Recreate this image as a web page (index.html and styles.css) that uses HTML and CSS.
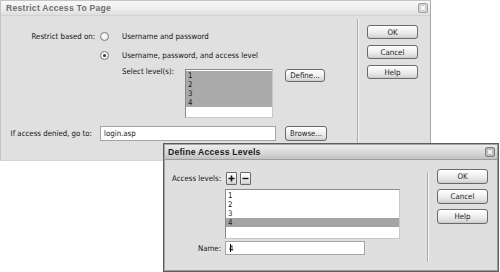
FILE: index.html
```html
<!DOCTYPE html>
<html>
<head>
<meta charset="utf-8">
<link rel="stylesheet" href="styles.css">
</head>
<body>
<div class="desk">
  <div class="dlg dlg1">
    <div class="title inactive">
      <span class="ttext">Restrict Access To Page</span>
      <svg class="close" width="10" height="10" viewBox="0 0 10 10"><rect x="0.5" y="0.5" width="9" height="9" rx="1.5" fill="#d0d0d0" stroke="#a0a0a0"/><path d="M3 3L7 7M7 3L3 7" stroke="#fff" stroke-width="1.4"/></svg>
    </div>
    <div class="body">
      <div class="main1">
        <div class="row r1">
          <span class="lbl l94">Restrict based on:</span>
          <span class="radio"></span>
          <span class="rtext">Username and password</span>
        </div>
        <div class="row r2">
          <span class="radio on"></span>
          <span class="rtext">Username, password, and access level</span>
        </div>
        <div class="row r3">
          <span class="sel-lbl">Select level(s):</span>
          <div class="list list1">
            <div class="item sel">1</div>
            <div class="item sel">2</div>
            <div class="item sel">3</div>
            <div class="item sel">4</div>
          </div>
          <div class="btn define">Define...</div>
        </div>
        <div class="row r4">
          <span class="lbl l91">If access denied, go to:</span>
          <div class="input in1">login.asp</div>
          <div class="btn browse">Browse...</div>
        </div>
      </div>
      <div class="divider div1"></div>
      <div class="btncol col1">
        <div class="btn side">OK</div>
        <div class="btn side">Cancel</div>
        <div class="btn side">Help</div>
      </div>
    </div>
  </div>

  <div class="dlg dlg2">
    <div class="title active">
      <span class="ttext">Define Access Levels</span>
      <svg class="close" width="10" height="10" viewBox="0 0 10 10"><rect x="0.5" y="0.5" width="9" height="9" rx="1.5" fill="#b8b8b8" stroke="#808080"/><path d="M3 3L7 7M7 3L3 7" stroke="#fff" stroke-width="1.4"/></svg>
    </div>
    <div class="body">
      <div class="main2">
        <div class="row a1">
          <span class="lbl l57">Access levels:</span>
          <div class="btn sq plus"><svg width="7" height="7" viewBox="0 0 7 7"><path d="M3.5 0.5V6.5M0.5 3.5H6.5" stroke="#111" stroke-width="1.6"/></svg></div>
          <div class="btn sq minus"><svg width="7" height="7" viewBox="0 0 7 7"><path d="M0.5 3.5H6.5" stroke="#111" stroke-width="1.4"/></svg></div>
        </div>
        <div class="list list2">
          <div class="item">1</div>
          <div class="item">2</div>
          <div class="item">3</div>
          <div class="item sel">4</div>
        </div>
        <div class="row a3">
          <span class="lbl l57">Name:</span>
          <div class="input in2">4<span class="caret"></span></div>
        </div>
      </div>
      <div class="divider div2"></div>
      <div class="btncol col2">
        <div class="btn side2">OK</div>
        <div class="btn side2">Cancel</div>
        <div class="btn side2">Help</div>
      </div>
    </div>
  </div>
</div>
</body>
</html>
```

FILE: styles.css
```css
html, body {
  margin: 0;
  padding: 0;
  background: #ffffff;
}

.desk {
  position: relative;
  width: 500px;
  height: 272px;
  overflow: hidden;
  font-family: "DejaVu Sans Condensed", "Liberation Sans", Arial, sans-serif;
  font-size: 7.8px;
  color: #141414;
}

.dlg {
  position: absolute;
  box-sizing: border-box;
  display: flex;
  flex-direction: column;
  background: #e0e0e0;
}

.dlg1 {
  left: 0;
  top: 0;
  width: 431px;
  height: 161px;
  border: 1px solid #c4c4c4;
  border-right-color: #a8a8a8;
  border-bottom-color: #d6d6d6;
}

.dlg2 {
  left: 163px;
  top: 143px;
  width: 336px;
  height: 129px;
  border: 1px solid #5c5c5c;
  box-shadow: inset 1px 1px 0 #a6a6a6, inset -1px -1px 0 #9a9a9a;
  background: #dfdfdf;
}

.title {
  height: 14px;
  display: flex;
  align-items: center;
  justify-content: space-between;
  padding: 0 2px 0 5px;
  flex: none;
  font-family: "Liberation Sans", Arial, sans-serif;
}

.title.inactive {
  background: linear-gradient(#f8f8f8, #ececec 60%, #dedede);
  border-bottom: 1px solid #d2d2d2;
  color: #6e6e6e;
}

.title.active {
  margin: 1px 1px 0 1px;
  padding-left: 3px;
  height: 14px;
  background: linear-gradient(#ececec, #dadada 50%, #c2c2c2);
  border-bottom: 1px solid #9c9c9c;
  color: #1a1a1a;
}

.ttext {
  font-weight: bold;
  font-size: 8.6px;
  letter-spacing: 0.25px;
}

.close {
  display: block;
}

.body {
  display: flex;
  flex: 1;
}

.row {
  display: flex;
  align-items: center;
}

.lbl {
  text-align: right;
  flex: none;
  white-space: nowrap;
}

.l94 { width: 94px; }
.l91 { width: 91px; }
.l57 { width: 57px; }

/* Dialog 1 */
.main1 {
  width: 356px;
  padding-top: 14px;
  flex: none;
}

.r1 {
  height: 12px;
}

.r1 .radio {
  margin-left: 5px;
}

.rtext {
  margin-left: 13px;
  white-space: nowrap;
}

.r2 {
  height: 12px;
  margin-top: 7px;
  padding-left: 99px;
}

.radio {
  width: 7px;
  height: 7px;
  border: 1px solid #7c7c7c;
  border-radius: 50%;
  background: radial-gradient(circle at 40% 40%, #ffffff, #e4e4e4);
  display: flex;
  align-items: center;
  justify-content: center;
  flex: none;
}

.radio.on::after {
  content: "";
  width: 3px;
  height: 3px;
  border-radius: 50%;
  background: #3a3a3a;
}

.r3 {
  margin-top: 5px;
  padding-left: 121px;
  align-items: flex-start;
}

.sel-lbl {
  width: 63px;
  line-height: 12px;
  flex: none;
  white-space: nowrap;
}

.list {
  box-sizing: border-box;
  background: #ffffff;
  border: 1px solid #8a8a8a;
  border-right-color: #c8c8c8;
  border-bottom-color: #c8c8c8;
  padding-top: 1px;
  flex: none;
}

.list1 {
  width: 88px;
  height: 49px;
  margin-top: 3px;
}

.item {
  height: 9px;
  line-height: 9px;
  padding-left: 2px;
}

.item.sel {
  background: #aaaaaa;
}

.btn {
  box-sizing: border-box;
  display: flex;
  align-items: center;
  justify-content: center;
  border: 1px solid #6a6a6a;
  border-radius: 3px;
  background: linear-gradient(#ffffff, #f0f0f0 45%, #dcdcdc 85%, #c8c8c8);
  color: #222;
  white-space: nowrap;
  flex: none;
}

.define {
  width: 40px;
  height: 13px;
  margin-top: 3px;
  margin-left: 12px;
}

.r4 {
  margin-top: 8px;
  height: 15px;
}

.input {
  box-sizing: border-box;
  background: #ffffff;
  border: 1px solid #a4a4a4;
  padding-left: 3px;
  display: flex;
  align-items: center;
  flex: none;
}

.in1 {
  width: 176px;
  height: 15px;
  margin-left: 8px;
}

.browse {
  width: 42px;
  height: 15px;
  margin-left: 9px;
}

.divider {
  width: 1px;
  background: #ababab;
  border-right: 1px solid #f6f6f6;
  flex: none;
}

.div1 {
  margin-top: 3px;
  height: 125px;
}

.btncol {
  display: flex;
  flex-direction: column;
  flex: none;
}

.col1 {
  margin-left: 8px;
  padding-top: 9px;
  gap: 6px;
}

.side {
  width: 51px;
  height: 14px;
}

/* Dialog 2 */
.main2 {
  width: 263px;
  padding-top: 12px;
  flex: none;
}

.a1 {
  height: 13px;
}

.sq {
  width: 11px;
  height: 13px;
  border-radius: 1px;
}

.plus {
  margin-left: 5px;
}

.minus {
  margin-left: 3px;
}

.list2 {
  width: 175px;
  height: 50px;
  margin-top: 4px;
  margin-left: 61px;
}

.list2 .item.sel {
  background: #a4a4a4;
}

.a3 {
  margin-top: 2px;
  height: 14px;
}

.in2 {
  width: 140px;
  height: 14px;
  margin-left: 4px;
}

.caret {
  display: inline-block;
  width: 1px;
  height: 8px;
  background: #000;
  margin-left: -3px;
}

.div2 {
  margin-top: 12px;
  height: 90px;
}

.col2 {
  margin-left: 8px;
  padding-top: 9px;
  gap: 5px;
}

.side2 {
  width: 51px;
  height: 15px;
}
```
